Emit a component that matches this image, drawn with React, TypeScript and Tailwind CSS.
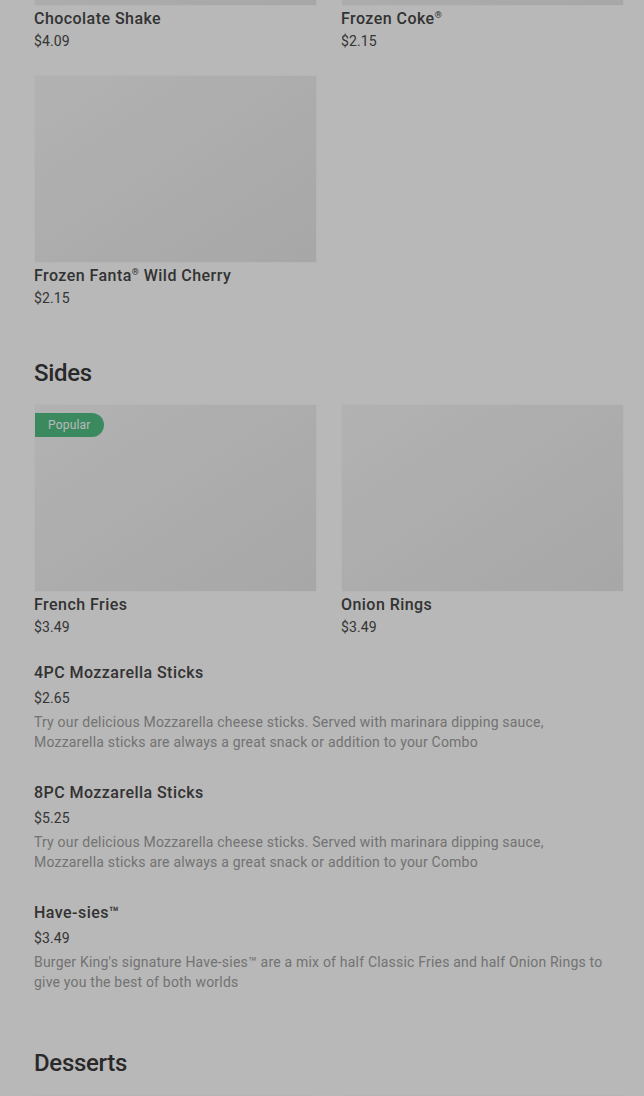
import React from 'react';

type GridItem = { name: React.ReactNode; price: string; popular?: boolean };
type ListItem = { name: React.ReactNode; price: string; description: string };

const drinks: GridItem[] = [
  { name: 'Chocolate Shake', price: '$4.09' },
  { name: <>Frozen Coke<sup className="text-[9px] top-[-0.7em]">®</sup></>, price: '$2.15' },
  { name: <>Frozen Fanta<sup className="text-[9px] top-[-0.7em]">®</sup> Wild Cherry</>, price: '$2.15' },
];

const sides: GridItem[] = [
  { name: 'French Fries', price: '$3.49', popular: true },
  { name: 'Onion Rings', price: '$3.49' },
];

const mozzDesc =
  'Try our delicious Mozzarella cheese sticks. Served with marinara dipping sauce, Mozzarella sticks are always a great snack or addition to your Combo';

const sideList: ListItem[] = [
  { name: '4PC Mozzarella Sticks', price: '$2.65', description: mozzDesc },
  { name: '8PC Mozzarella Sticks', price: '$5.25', description: mozzDesc },
  {
    name: 'Have-sies™',
    price: '$3.49',
    description:
      "Burger King's signature Have-sies™ are a mix of half Classic Fries and half Onion Rings to give you the best of both worlds",
  },
];

// 商品卡片（圖片 + 名稱 + 價格）
const Card: React.FC<{ item: GridItem }> = ({ item }) => (
  <div className="flex flex-col">
    <div className="relative h-[188px] w-full bg-gradient-to-br from-[#f7f7f7] to-[#e8e8e8] border border-[#fbfbfb]">
      {item.popular && (
        <span className="absolute left-0 top-2 h-6 px-[13px] flex items-center rounded-l-[3px] rounded-r-full bg-[#52c084] text-[12px] tracking-[0.2px] text-white">
          Popular
        </span>
      )}
    </div>
    <h3 className="mt-px text-[16px] leading-6 font-medium tracking-[0.45px] text-[#474747]">{item.name}</h3>
    <p className="text-[14px] leading-5 tracking-[0.1px] text-[#4a4a4a]">{item.price}</p>
  </div>
);

const App: React.FC = () => {
  return (
    <div className="relative min-h-[1096px] overflow-hidden bg-white font-['Roboto',sans-serif]">
      <div className="-mt-[182px] pl-[34px] pr-[20px]">
        {/* Drinks */}
        <div className="grid grid-cols-2 gap-x-6 gap-y-6">
          {drinks.map((d, i) => (
            <Card key={i} item={d} />
          ))}
        </div>

        {/* Sides */}
        <section className="pt-[49px]">
          <h2 className="text-[24px] leading-8 font-medium tracking-[-0.3px] text-[#3a3a3a]">Sides</h2>
          <div className="mt-[15px] grid grid-cols-2 gap-x-6">
            {sides.map((d, i) => (
              <Card key={i} item={d} />
            ))}
          </div>
          <div className="mt-6 flex flex-col gap-[29px]">
            {sideList.map((item, i) => (
              <div key={i} className="pr-[12px]">
                <h3 className="text-[16px] leading-6 font-medium tracking-[0.45px] text-[#474747]">{item.name}</h3>
                <p className="mt-[3px] text-[14px] leading-5 tracking-[0.1px] text-[#4a4a4a]">{item.price}</p>
                <p className="mt-1 text-[14px] leading-5 tracking-[0.2px] text-[#a0a0a0]">{item.description}</p>
              </div>
            ))}
          </div>
        </section>

        {/* Desserts */}
        <section className="pt-[55px]">
          <h2 className="text-[24px] leading-8 font-medium tracking-[-0.3px] text-[#3a3a3a]">Desserts</h2>
          <div className="mt-4 grid grid-cols-2 gap-x-6">
            <div className="h-[188px] bg-gradient-to-br from-[#f7f7f7] to-[#e8e8e8] border border-[#fbfbfb]" />
            <div className="h-[188px] bg-gradient-to-br from-[#f7f7f7] to-[#e8e8e8] border border-[#fbfbfb]" />
          </div>
        </section>
      </div>

      {/* modal backdrop */}
      <div className="absolute inset-0 bg-black/[0.28]" />
    </div>
  );
};

export default App;
